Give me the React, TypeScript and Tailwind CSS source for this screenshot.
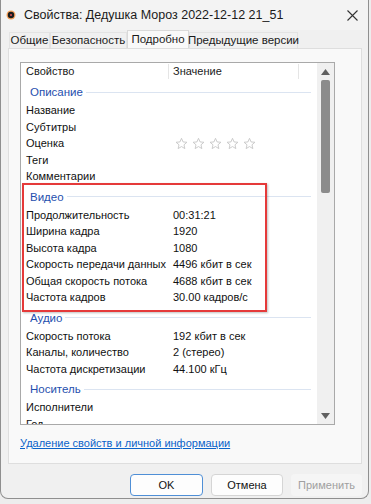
const FONT = { fontFamily: '"Liberation Sans", Arial, sans-serif' };

type Row = { name: string; value?: string; stars?: boolean };
type Group = { title: string; rows: Row[] };

const GROUPS: Group[] = [
  {
    title: 'Описание',
    rows: [
      { name: 'Название' },
      { name: 'Субтитры' },
      { name: 'Оценка', stars: true },
      { name: 'Теги' },
      { name: 'Комментарии' },
    ],
  },
  {
    title: 'Видео',
    rows: [
      { name: 'Продолжительность', value: '00:31:21' },
      { name: 'Ширина кадра', value: '1920' },
      { name: 'Высота кадра', value: '1080' },
      { name: 'Скорость передачи данных', value: '4496 кбит в сек' },
      { name: 'Общая скорость потока', value: '4688 кбит в сек' },
      { name: 'Частота кадров', value: '30.00 кадров/с' },
    ],
  },
  {
    title: 'Аудио',
    rows: [
      { name: 'Скорость потока', value: '192 кбит в сек' },
      { name: 'Каналы, количество', value: '2 (стерео)' },
      { name: 'Частота дискретизации', value: '44.100 кГц' },
    ],
  },
  {
    title: 'Носитель',
    rows: [{ name: 'Исполнители' }, { name: 'Год' }],
  },
];

function Star() {
  return (
    <svg width="13" height="13" viewBox="0 0 24 24" fill="none" stroke="#c4c4c4" strokeWidth="1.6">
      <path d="M12 2.5l2.9 6.6 7.1.6-5.4 4.7 1.6 7-6.2-3.8-6.2 3.8 1.6-7L2 9.7l7.1-.6z" />
    </svg>
  );
}

function FileIcon() {
  return (
    <svg width="10" height="10" viewBox="0 0 10 10">
      <circle cx="5" cy="5" r="4.5" fill="#f4a15a" />
      <circle cx="5" cy="5" r="3.2" fill="#1c1c1c" />
      <circle cx="5" cy="5" r="1" fill="#e05050" />
    </svg>
  );
}

function Tab({ label, active, w }: { label: string; active?: boolean; w: string }) {
  return active ? (
    <div
      className={`${w} flex h-[18px] items-center justify-center whitespace-nowrap border border-b-0 border-[#d9d9d9] bg-[#f9f9f9] text-[11.5px] text-[#1a1a1a]`}
    >
      {label}
    </div>
  ) : (
    <div
      className={`${w} flex h-[16px] items-center justify-center whitespace-nowrap border border-b-0 border-[#e3e3e3] bg-[#f0f0f0] text-[11.5px] text-[#1a1a1a]`}
    >
      {label}
    </div>
  );
}

function PropertyList() {
  return (
    <div className="relative flex h-[363px] w-[315px] border border-[#a9a9a9] bg-white">
      <div className="flex-1 overflow-hidden">
        <div className="flex h-[17px] items-center text-[11px] text-[#1a1a1a]">
          <div className="w-[147px] pl-[5px]">Свойство</div>
          <div className="h-[15px] w-px bg-[#e5e5e5]" />
          <div className="w-[129px] pl-[4px]">Значение</div>
          <div className="h-[15px] w-px bg-[#e5e5e5]" />
        </div>
        {GROUPS.map((g) => (
          <div key={g.title}>
            <div className="flex h-[22px] items-center pl-[9px] pt-[2px] pr-[6px]">
              <span className="text-[11.5px] leading-[16px] text-[#1f4fae]">{g.title}</span>
              <div className="ml-[3px] h-px flex-1 bg-[#dbe4f1]" />
            </div>
            {g.rows.map((r) => (
              <div key={r.name} className="flex h-[16.5px] items-center text-[#111]">
                <div className="w-[152px] shrink-0 whitespace-nowrap pl-[5px] text-[11px]">{r.name}</div>
                <div className="flex items-center whitespace-nowrap text-[11px]">
                  {r.stars ? (
                    <div className="ml-[2px] flex gap-[4px]">
                      <Star />
                      <Star />
                      <Star />
                      <Star />
                      <Star />
                    </div>
                  ) : (
                    r.value
                  )}
                </div>
              </div>
            ))}
          </div>
        ))}
      </div>
      <div className="flex w-[17px] flex-col items-center bg-[#f0f0f0]">
        <div className="flex h-[17px] items-center">
          <svg width="9" height="6" viewBox="0 0 9 6">
            <path d="M4.5 0L9 6H0z" fill="#606060" />
          </svg>
        </div>
        <div className="h-[113px] w-[9px] rounded-[2px] bg-[#8b8b8b]" />
        <div className="flex-1" />
        <div className="flex h-[17px] items-center">
          <svg width="9" height="6" viewBox="0 0 9 6">
            <path d="M0 0H9L4.5 6z" fill="#606060" />
          </svg>
        </div>
      </div>
      <div className="pointer-events-none absolute left-[1px] top-[120px] h-[129px] w-[245px] border-2 border-[#e53a3a] shadow-[1px_1px_2px_rgba(0,0,0,0.25)]" />
    </div>
  );
}

export default function App() {
  return (
    <div className="h-[504px] w-[371px] bg-[#ededed]" style={FONT}>
      <div className="flex h-[499px] w-[369px] flex-col rounded-b-[8px] border-x border-b border-[#8f8f8f] bg-[#f0f0f0]">
        <div className="flex h-[30px] items-center bg-[#f3f3f3] pl-[5px] pr-[10px]">
          <FileIcon />
          <span className="ml-[8px] text-[12.5px] text-[#1a1a1a]">Свойства: Дедушка Мороз 2022-12-12 21_51</span>
          <div className="flex-1" />
          <svg width="11" height="11" viewBox="0 0 11 11" stroke="#333" strokeWidth="1.1">
            <path d="M0.5 0.5l10 10M10.5 0.5l-10 10" />
          </svg>
        </div>
        <div className="flex h-[18px] items-end pl-[8px]">
          <Tab label="Общие" w="w-[41px]" />
          <Tab label="Безопасность" w="w-[77px]" />
          <Tab label="Подробно" active w="w-[62px]" />
          <Tab label="Предыдущие версии" w="w-[109px]" />
        </div>
        <div className="ml-[7px] flex h-[416px] w-[354px] flex-col border border-[#dedede] bg-[#f9f9f9] pl-[11px] pt-[13px]">
          <PropertyList />
          <div className="mt-[10px] text-[11px] leading-[16px] text-[#0b63c9] underline">
            Удаление свойств и личной информации
          </div>
        </div>
        <div className="ml-[7px] mt-[10px] flex w-[354px] justify-end gap-[8px] text-[11px]">
          <div className="flex h-[22px] w-[73px] items-center justify-center rounded-[4px] border border-[#4f8fd6] bg-[#fdfdfd] text-[#111]">
            OK
          </div>
          <div className="flex h-[22px] w-[72px] items-center justify-center rounded-[4px] border border-[#d5d5d5] bg-[#fdfdfd] text-[#111]">
            Отмена
          </div>
          <div className="flex h-[22px] w-[71px] items-center justify-center rounded-[4px] bg-[#f5f5f5] text-[#a0a0a0]">
            Применить
          </div>
        </div>
      </div>
    </div>
  );
}
